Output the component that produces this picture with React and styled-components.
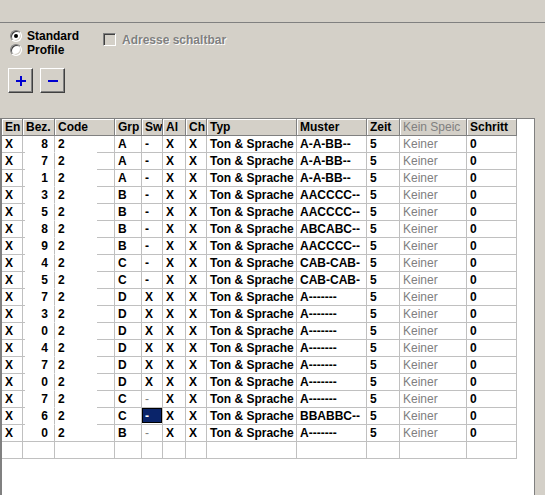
import React from "react";
import styled, { createGlobalStyle } from "styled-components";

const GlobalStyle = createGlobalStyle`
  html, body { margin: 0; padding: 0; background: #d4d0c8; }
  body { font-family: "Liberation Sans", Arial, sans-serif; }
`;

const Window = styled.div`
  width: 545px;
  height: 495px;
  overflow: hidden;
  background: #d4d0c8;
  display: flex;
  flex-direction: column;
`;

const TopBand = styled.div`
  height: 22px;
  flex-shrink: 0;
  border-bottom: 1px solid #808080;
`;

const Options = styled.div`
  display: flex;
  padding: 6px 0 0 10px;
`;

const RadioGroup = styled.div`
  width: 93px;
  display: flex;
  flex-direction: column;
`;

const RadioRow = styled.label`
  height: 14px;
  display: flex;
  align-items: center;
  gap: 5px;
  font-size: 12px;
  font-weight: bold;
  color: #000;
`;

const RadioDot = styled.span`
  width: 12px;
  height: 12px;
  box-sizing: border-box;
  border-radius: 50%;
  background: #fff;
  border: 1px solid;
  border-color: #808080 #fff #fff #808080;
  box-shadow: inset 1px 1px #404040, inset -1px -1px #d4d0c8;
  position: relative;
  &::after {
    content: "";
    display: ${(p) => (p.$checked ? "block" : "none")};
    position: absolute;
    left: 3px;
    top: 3px;
    width: 4px;
    height: 4px;
    border-radius: 50%;
    background: #000;
  }
`;

const CheckLabel = styled.label`
  margin-top: 4px;
  height: 13px;
  display: flex;
  align-items: center;
  gap: 6px;
  font-size: 12px;
  font-weight: bold;
  color: #808080;
  text-shadow: 1px 1px #fff;
`;

const CheckBox = styled.span`
  width: 13px;
  height: 13px;
  box-sizing: border-box;
  background: #d4d0c8;
  border: 1px solid;
  border-color: #808080 #fff #fff #808080;
  box-shadow: inset 1px 1px #404040, inset -1px -1px #d4d0c8;
`;

const ButtonRow = styled.div`
  display: flex;
  gap: 7px;
  padding-left: 8px;
  margin-top: 11px;
`;

const ToolButton = styled.button`
  width: 25px;
  height: 25px;
  padding: 0;
  box-sizing: border-box;
  background: #d4d0c8;
  border: 1px solid;
  border-color: #fff #404040 #404040 #fff;
  box-shadow: inset -1px -1px #808080;
  display: flex;
  align-items: center;
  justify-content: center;
`;

const GridFrame = styled.div`
  margin-top: 25px;
  flex: 1;
  width: 535px;
  box-sizing: border-box;
  background: #fff;
  border-top: 1px solid #808080;
  border-left: 2px solid #808080;
  border-right: 1px solid #808080;
`;

const Table = styled.div`
  display: grid;
  grid-template-columns: 21px 32px 60px 27px 21px 23px 21px 90px 70px 33px 67px 50px;
  grid-auto-rows: 17px;
  width: 515px;
`;

const HeadCell = styled.div`
  box-sizing: border-box;
  background: #d4d0c8;
  border-right: 1px solid #808080;
  border-bottom: 1px solid #808080;
  box-shadow: inset 1px 1px #fff;
  padding-left: 3px;
  line-height: 16px;
  font-size: 12px;
  font-weight: ${(p) => (p.$muted ? "normal" : "bold")};
  color: ${(p) => (p.$muted ? "#808080" : "#000")};
  white-space: nowrap;
  overflow: hidden;
`;

const gapLine = (p) => {
  if (p.$gap === "left")
    return "linear-gradient(#c0c0c0, #c0c0c0) left bottom / 2px 1px no-repeat";
  if (p.$gap === "right")
    return "linear-gradient(#c0c0c0, #c0c0c0) right bottom / 18px 1px no-repeat";
  return "none";
};

const Cell = styled.div`
  box-sizing: border-box;
  border-right: 1px solid #c0c0c0;
  border-bottom: 1px solid ${(p) => (p.$gap ? "transparent" : "#c0c0c0")};
  background: ${gapLine};
  background-origin: border-box;
  padding: 0 ${(p) => (p.$right ? "6px" : "0")} 0 3px;
  text-align: ${(p) => (p.$right ? "right" : "left")};
  line-height: 16px;
  font-size: 12px;
  font-weight: ${(p) => (p.$muted ? "normal" : "bold")};
  color: ${(p) => (p.$muted ? "#808080" : "#000")};
  white-space: nowrap;
  overflow: hidden;
`;

const Selected = styled.span`
  display: block;
  height: 15px;
  margin: 0 0 0 -3px;
  padding-left: 3px;
  background: #0a246a;
  color: #fff;
  box-shadow: inset 0 0 0 1px #000;
`;

const headers = ["En", "Bez.", "Code", "Grp", "Sw", "Al", "Ch", "Typ", "Muster", "Zeit", "Kein Speic", "Schritt"];

// bez, grp, sw, muster, sw-style
const rows = [
  [8, "A", "-", "A-A-BB--", ""],
  [7, "A", "-", "A-A-BB--", ""],
  [1, "A", "-", "A-A-BB--", ""],
  [3, "B", "-", "AACCCC--", ""],
  [5, "B", "-", "AACCCC--", ""],
  [8, "B", "-", "ABCABC--", ""],
  [9, "B", "-", "AACCCC--", ""],
  [4, "C", "-", "CAB-CAB-", ""],
  [5, "C", "-", "CAB-CAB-", ""],
  [7, "D", "X", "A-------", ""],
  [3, "D", "X", "A-------", ""],
  [0, "D", "X", "A-------", ""],
  [4, "D", "X", "A-------", ""],
  [7, "D", "X", "A-------", ""],
  [0, "D", "X", "A-------", ""],
  [7, "C", "-", "A-------", "muted"],
  [6, "C", "-", "BBABBC--", "selected"],
  [0, "B", "-", "A-------", "muted"],
];

const PlusIcon = () => (
  <svg width="10" height="10" viewBox="0 0 10 10">
    <rect x="4" y="0" width="2" height="10" fill="#0000d0" />
    <rect x="0" y="4" width="10" height="2" fill="#0000d0" />
  </svg>
);

const MinusIcon = () => (
  <svg width="10" height="10" viewBox="0 0 10 10">
    <rect x="0" y="4" width="10" height="2" fill="#0000d0" />
  </svg>
);

const App = () => {
  return (
    <Window>
      <GlobalStyle />
      <TopBand />
      <Options>
        <RadioGroup>
          <RadioRow>
            <RadioDot $checked />
            Standard
          </RadioRow>
          <RadioRow>
            <RadioDot />
            Profile
          </RadioRow>
        </RadioGroup>
        <CheckLabel>
          <CheckBox />
          Adresse schaltbar
        </CheckLabel>
      </Options>
      <ButtonRow>
        <ToolButton>
          <PlusIcon />
        </ToolButton>
        <ToolButton>
          <MinusIcon />
        </ToolButton>
      </ButtonRow>
      <GridFrame>
        <Table>
          {headers.map((h) => (
            <HeadCell key={h} $muted={h === "Kein Speic"}>
              {h}
            </HeadCell>
          ))}
          {rows.map(([bez, grp, sw, muster, swStyle], i) => {
            const gap = i < rows.length - 1;
            return (
              <React.Fragment key={i}>
                <Cell>X</Cell>
                <Cell $right $gap={gap ? "left" : undefined}>
                  {bez}
                </Cell>
                <Cell $gap={gap ? "right" : undefined}>2</Cell>
                <Cell>{grp}</Cell>
                <Cell $muted={swStyle === "muted"}>
                  {swStyle === "selected" ? <Selected>{sw}</Selected> : sw}
                </Cell>
                <Cell>X</Cell>
                <Cell>X</Cell>
                <Cell>Ton &amp; Sprache</Cell>
                <Cell>{muster}</Cell>
                <Cell>5</Cell>
                <Cell $muted>Keiner</Cell>
                <Cell>0</Cell>
              </React.Fragment>
            );
          })}
          {headers.map((h) => (
            <Cell key={"e" + h} />
          ))}
        </Table>
      </GridFrame>
    </Window>
  );
};

export default App;
